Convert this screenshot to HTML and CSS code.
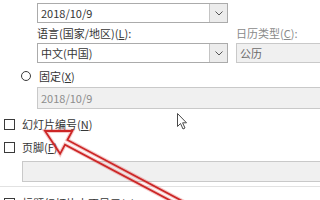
FILE: index.html
```html
<!DOCTYPE html>
<html lang="zh-CN">
<head>
<meta charset="utf-8">
<title>页眉和页脚</title>
<link rel="stylesheet" href="styles.css">
</head>
<body>
<div class="page">
  <div class="date-group">
    <div class="select">
      <span class="val">2018/10/9</span>
      <span class="drop"><svg width="8" height="5" viewBox="0 0 8 5"><path d="M0.5 0.5 L4 4 L7.5 0.5" fill="none" stroke="#555" stroke-width="1"/></svg></span>
    </div>
    <div class="lang-row">
      <div class="col">
        <div class="label">语言(国家/地区)(<u>L</u>):</div>
        <div class="select">
          <span class="val">中文(中国)</span>
          <span class="drop"><svg width="8" height="5" viewBox="0 0 8 5"><path d="M0.5 0.5 L4 4 L7.5 0.5" fill="none" stroke="#555" stroke-width="1"/></svg></span>
        </div>
      </div>
      <div class="col col-cal">
        <div class="label dim">日历类型(<u>C</u>):</div>
        <div class="input gray"><span class="val">公历</span></div>
      </div>
    </div>
  </div>
  <div class="radio-row"><span class="radio"></span><span>固定(<u>X</u>)</span></div>
  <div class="input disabled fixed-input"><span class="val">2018/10/9</span></div>
  <div class="check-row first"><span class="check"></span><span>幻灯片编号(<u>N</u>)</span></div>
  <div class="check-row second"><span class="check"></span><span>页脚(<u>F</u>)</span></div>
  <div class="input disabled footer-input"></div>
  <div class="divider"></div>
  <div class="check-row bottom"><span class="check"></span><span>标题幻灯片中不显示(<u>S</u>)</span></div>
</div>
<svg class="overlay" width="320" height="200" viewBox="0 0 320 200">
  <path class="arrow-glow" d="M45 131 L72.3 130.8 L67.4 140 L196.2 208.4 L193.8 213 L65 144.6 L60.1 153.8 Z"/>
  <path class="arrow" d="M45 131 L72.3 130.8 L67.4 140 L196.2 208.4 L193.8 213 L65 144.6 L60.1 153.8 Z"/>
  <path class="cursor" d="M177.5 113.5 L177.5 126.5 L180.5 123.5 L183 129 L185 128 L182.6 122.8 L186.5 122.8 Z"/>
</svg>
</body>
</html>
```

FILE: styles.css
```css
html, body {
  margin: 0;
  padding: 0;
}
body {
  width: 320px;
  height: 200px;
  overflow: hidden;
  position: relative;
  background: #ffffff;
  font-family: "Noto Sans CJK SC", "Noto Sans", sans-serif;
  font-size: 11px;
  color: #363636;
}
u {
  text-decoration: underline;
  text-underline-offset: 1px;
}
.page {
  padding-top: 3px;
}
.date-group {
  margin-left: 37px;
}
.select {
  display: flex;
  width: 191px;
  height: 20px;
  box-sizing: border-box;
  border: 1px solid #ababab;
  background: #ffffff;
}
.val {
  flex: 1;
  padding-left: 3px;
  line-height: 18px;
  white-space: nowrap;
}
.drop {
  width: 17px;
  border-left: 1px solid #c4c4c4;
  background: #ececec;
  display: flex;
  align-items: center;
  justify-content: center;
}
.lang-row {
  display: flex;
  gap: 8px;
  margin-top: 3px;
}
.col {
  flex: none;
}
.label {
  height: 14px;
  line-height: 14px;
  margin-bottom: 3px;
  white-space: nowrap;
}
.label.dim {
  color: #8a8a8a;
}
.input {
  box-sizing: border-box;
  height: 20px;
  border: 1px solid #c9c9c9;
  display: flex;
}
.input.gray {
  width: 110px;
  background: #f0f0f0;
  color: #6a6a6a;
}
.input.disabled {
  background: #f0f0f0;
  color: #8d8d8d;
}
.fixed-input {
  margin-left: 37px;
  margin-top: 4px;
  width: 300px;
  height: 22px;
}
.fixed-input .val {
  line-height: 20px;
}
.radio-row {
  display: flex;
  align-items: center;
  height: 14px;
  margin-top: 6px;
  padding-left: 21px;
  white-space: nowrap;
}
.radio {
  width: 10px;
  height: 10px;
  box-sizing: border-box;
  border: 1px solid #3a3a3a;
  border-radius: 50%;
  background: #ffffff;
  margin-right: 8px;
}
.check-row {
  display: flex;
  align-items: center;
  height: 14px;
  padding-left: 4px;
  white-space: nowrap;
}
.check-row.first {
  margin-top: 8px;
}
.check-row.second {
  margin-top: 9px;
}
.check-row.bottom {
  margin-top: 9px;
}
.check {
  width: 11px;
  height: 11px;
  box-sizing: border-box;
  border: 1px solid #3a3a3a;
  background: #ffffff;
  margin-right: 7px;
}
.footer-input {
  margin-left: 22px;
  margin-top: 7px;
  width: 310px;
  height: 21px;
}
.divider {
  margin-top: 4px;
  height: 1px;
  background: #e2e2e2;
}
.overlay {
  position: absolute;
  left: 0;
  top: 0;
  pointer-events: none;
}
.arrow-glow {
  fill: none;
  stroke: rgba(220, 60, 60, 0.28);
  stroke-width: 4;
  stroke-linejoin: miter;
}
.arrow {
  fill: none;
  stroke: #cc2626;
  stroke-width: 1.8;
  stroke-linejoin: miter;
}
.cursor {
  fill: #ffffff;
  stroke: #4a4a4a;
  stroke-width: 1;
  stroke-linejoin: round;
}
```
